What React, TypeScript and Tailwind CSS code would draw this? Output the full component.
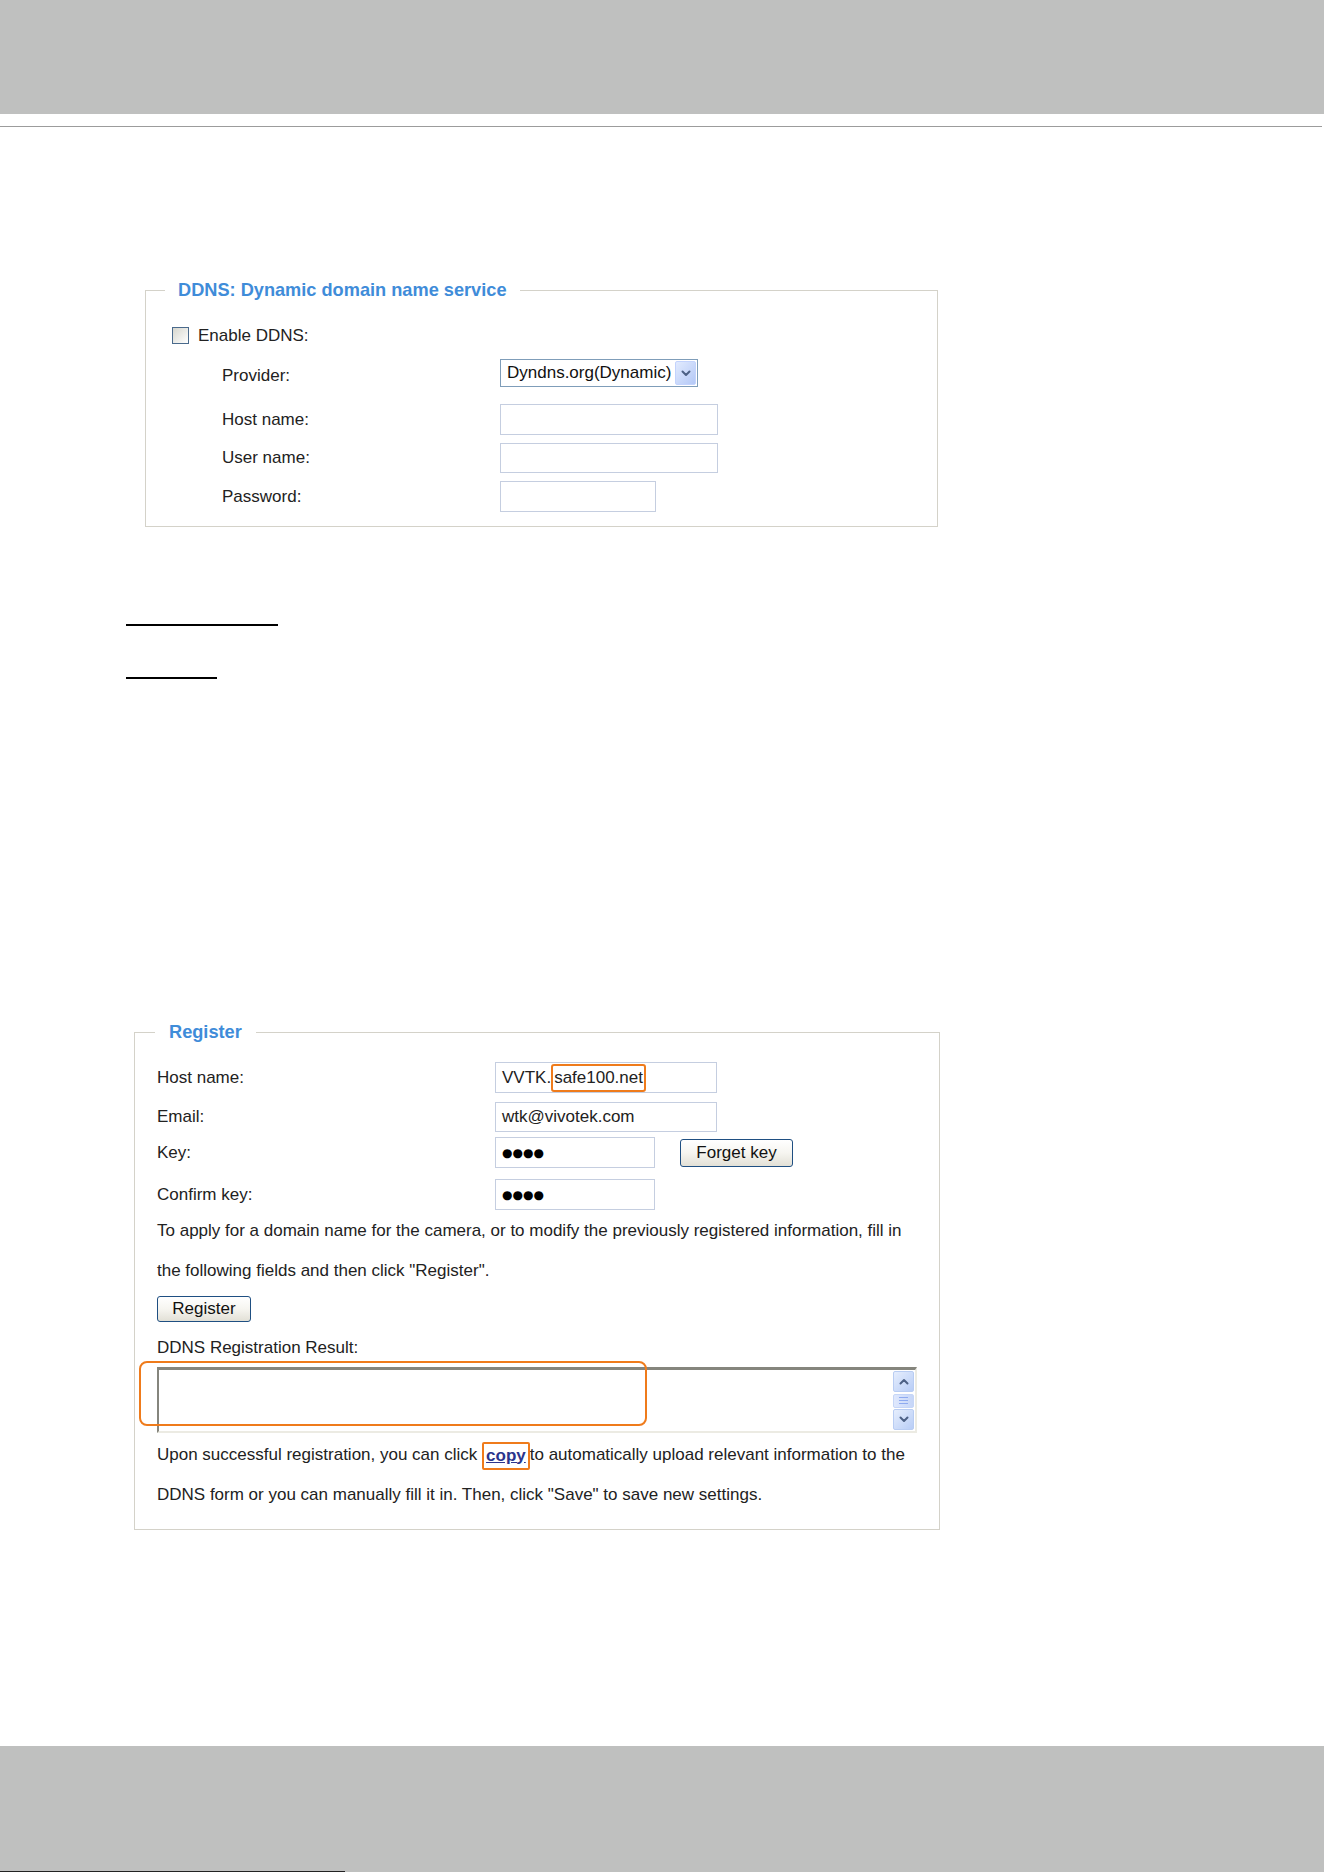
import React from 'react';

const orange = 'border-[#ef7b1b]';

function Chevron({ up = false }: { up?: boolean }) {
  return (
    <svg width="10" height="7" viewBox="0 0 10 7" fill="none">
      <path
        d={up ? 'M1.5 5.5L5 2l3.5 3.5' : 'M1.5 1.5L5 5l3.5-3.5'}
        stroke="#4d6185"
        strokeWidth="2"
        strokeLinecap="round"
        strokeLinejoin="round"
      />
    </svg>
  );
}

function TextBox({ width, height = 31, children }: { width: number; height?: number; children?: React.ReactNode }) {
  return (
    <div
      className="flex items-center border border-[#c5cee0] bg-white pl-[6px] text-[17px] text-[#222]"
      style={{ width, height }}
    >
      {children}
    </div>
  );
}

function Dots() {
  return <span className="font-['DejaVu_Sans',sans-serif] text-[12px] text-black">●●●●</span>;
}

function XpButton({ label, width, height }: { label: string; width: number; height: number }) {
  return (
    <div
      className="flex items-center justify-center rounded-[3px] border border-[#1f4f82] bg-gradient-to-b from-white via-[#f6f5f0] to-[#e2e0d6] text-[17px] text-[#111]"
      style={{ width, height }}
    >
      {label}
    </div>
  );
}

function ScrollButton({ up = false }: { up?: boolean }) {
  return (
    <div className="flex h-[21px] w-[21px] items-center justify-center rounded-[2px] border border-[#b9cdf3] bg-gradient-to-br from-[#e6eefd] to-[#b8cdf6]">
      <Chevron up={up} />
    </div>
  );
}

export default function App() {
  return (
    <div className="flex h-[1872px] w-[1324px] flex-col bg-white font-['Liberation_Sans',Arial,sans-serif] text-[#222]">
      {/* header band */}
      <div className="h-[114px] w-full bg-[#bfc0bf]" />
      <div className="mt-[12px] h-px w-[1322px] bg-[#9c9c9c]" />

      {/* DDNS settings */}
      <fieldset className="ml-[145px] mt-[153px] w-[793px] border border-[#d4d2c9] pb-[14px]">
        <legend className="ml-[19px] px-[13px] text-[18.2px] font-bold leading-[20px] text-[#3f8cd9]">
          DDNS: Dynamic domain name service
        </legend>

        <div className="ml-[26px] mt-[27px] flex h-[17px] items-center">
          <div className="h-[17px] w-[17px] border border-[#4a6a8c] bg-gradient-to-br from-[#d6d6ce] to-white" />
          <span className="ml-[9px] text-[17px]">Enable DDNS:</span>
        </div>

        <div className="ml-[76px]">
          <div className="mt-[15px] flex h-[28px] items-center">
            <span className="w-[278px] pt-[5px] text-[17px]">Provider:</span>
            <div className="flex h-[28px] w-[198px] items-center justify-between border border-[#7f9db9] bg-white pl-[6px] pr-[1px] text-[17px] text-[#111]">
              <span>Dyndns.org(Dynamic)</span>
              <div className="flex h-[24px] w-[21px] items-center justify-center rounded-[2px] border border-[#c3d3fd] bg-gradient-to-br from-[#e2ebfe] to-[#b4c8f6]">
                <Chevron />
              </div>
            </div>
          </div>
          <div className="mt-[17px] flex h-[31px] items-center">
            <span className="w-[278px] text-[17px]">Host name:</span>
            <TextBox width={218} />
          </div>
          <div className="mt-[8px] flex h-[30px] items-center">
            <span className="w-[278px] text-[17px]">User name:</span>
            <TextBox width={218} height={30} />
          </div>
          <div className="mt-[8px] flex h-[31px] items-center">
            <span className="w-[278px] text-[17px]">Password:</span>
            <TextBox width={156} />
          </div>
        </div>
      </fieldset>

      {/* underlined headings */}
      <div className="ml-[126px] mt-[97px] h-[2px] w-[152px] bg-black" />
      <div className="ml-[126px] mt-[51px] h-[2px] w-[91px] bg-black" />

      {/* Register */}
      <fieldset className="ml-[134px] mt-[343px] w-[806px] border border-[#d4d2c9] pb-[14px] pl-[22px]">
        <legend className="ml-[-2px] px-[14px] text-[18.2px] font-bold leading-[20px] text-[#3f8cd9]">Register</legend>

        <div className="mt-[20px] flex h-[31px] items-center">
          <span className="w-[338px] text-[17px]">Host name:</span>
          <TextBox width={222}>
            <span>VVTK.</span>
            <span className={`flex h-[28px] items-center self-end rounded-[3px] border-2 ${orange} px-[1px]`}>safe100.net</span>
          </TextBox>
        </div>
        <div className="mt-[9px] flex h-[30px] items-center">
          <span className="w-[338px] text-[17px]">Email:</span>
          <TextBox width={222} height={30}>
            wtk@vivotek.com
          </TextBox>
        </div>
        <div className="mt-[5px] flex h-[31px] items-center">
          <span className="w-[338px] text-[17px]">Key:</span>
          <TextBox width={160}>
            <Dots />
          </TextBox>
          <div className="ml-[25px]">
            <XpButton label="Forget key" width={113} height={28} />
          </div>
        </div>
        <div className="mt-[11px] flex h-[31px] items-center">
          <span className="w-[338px] text-[17px]">Confirm key:</span>
          <TextBox width={160}>
            <Dots />
          </TextBox>
        </div>

        <p className="mt-[1px] text-[17px] leading-[40px]">
          To apply for a domain name for the camera, or to modify the previously registered information, fill in
          <br />
          the following fields and then click "Register".
        </p>

        <div className="mt-[5px]">
          <XpButton label="Register" width={94} height={26} />
        </div>

        <p className="mt-[14px] text-[17px] leading-[24px]">DDNS Registration Result:</p>

        <div className="relative mt-[7px] h-[66px] w-[760px]">
          <div className="flex h-full w-full justify-end border-2 border-b-[#ecebe3] border-l-[#85857d] border-r-[#ecebe3] border-t-[3px] border-t-[#85857d] bg-white py-[1px] pr-[1px]">
            <div className="flex flex-col justify-between">
              <ScrollButton up />
              <div className="flex h-[14px] w-[21px] flex-col items-center justify-center gap-[2px] rounded-[2px] border border-[#c6d6f7] bg-gradient-to-r from-[#dfe8fd] to-[#c6d6f8]">
                <div className="h-px w-[9px] bg-[#8eaaf0]" />
                <div className="h-px w-[9px] bg-[#8eaaf0]" />
                <div className="h-px w-[9px] bg-[#8eaaf0]" />
              </div>
              <ScrollButton />
            </div>
          </div>
          <div className={`absolute left-[-18px] top-[-6px] h-[65px] w-[508px] rounded-[8px] border-2 ${orange}`} />
        </div>

        <p className="mt-[2px] text-[17px] leading-[40px]">
          Upon successful registration, you can click{' '}
          <span className={`inline-block h-[28px] rounded-[2px] border-2 ${orange} px-[2px] align-middle leading-[24px]`}>
            <span className="font-bold text-[#2b358c] underline">copy</span>
          </span>
          to automatically upload relevant information to the
          <br />
          DDNS form or you can manually fill it in. Then, click "Save" to save new settings.
        </p>
      </fieldset>

      {/* footer band */}
      <div className="mt-auto flex h-[126px] w-full flex-col justify-end bg-[#bfc0bf]">
        <div className="h-px w-[345px] bg-[#222]" />
      </div>
    </div>
  );
}
